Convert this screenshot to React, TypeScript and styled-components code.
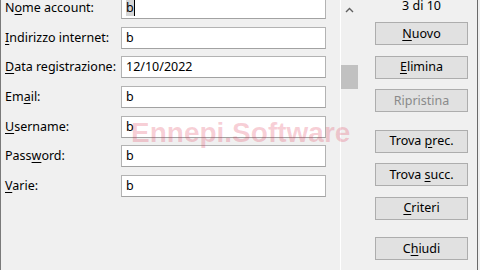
import React from "react";
import styled, { createGlobalStyle } from "styled-components";

const GlobalStyle = createGlobalStyle`
  html, body {
    margin: 0;
    background: #f0f0f0;
    overflow: hidden;
  }
  body {
    font-family: "Noto Sans", "Open Sans", sans-serif;
    font-size: 12.5px;
    color: #000;
  }
`;

const Frame = styled.div`
  position: relative;
  display: flex;
  width: 476px;
  height: 270px;
  border-left: 1px solid #7a7a7a;
  border-right: 1px solid #6a6a6a;
  overflow: hidden;
`;

const FormPanel = styled.div`
  display: grid;
  grid-template-columns: 116px 205px;
  grid-auto-rows: 22px;
  row-gap: 7.67px;
  align-items: center;
  align-content: start;
  width: 335px;
  padding-left: 4px;
  margin-top: -3px;
`;

const Label = styled.label`
  white-space: nowrap;
  line-height: 16px;
`;

const Key = styled.span`
  text-decoration: underline;
  text-underline-offset: 2px;
`;

const Field = styled.div`
  box-sizing: border-box;
  height: 22px;
  background: #fff;
  border: 1px solid #b3b3b3;
  border-bottom-color: #a2a2a2;
  padding-left: 4px;
  line-height: 20px;
  white-space: nowrap;
`;

const Selected = styled.span`
  background: #d6d6d6;
  border-right: 1px solid #000;
`;

const ScrollColumn = styled.div`
  width: 17px;
  border-left: 1px solid #ffffff;
  display: flex;
  flex-direction: column;
  align-items: center;
`;

const Arrow = styled.svg`
  margin-top: 7px;
`;

const Thumb = styled.div`
  margin-top: 52px;
  width: 17px;
  height: 24px;
  background: #c1c1c1;
`;

const ButtonColumn = styled.div`
  display: flex;
  flex-direction: column;
  width: 93px;
  margin-left: 17px;
`;

const Counter = styled.div`
  height: 22px;
  margin-top: -1px;
  margin-bottom: 1px;
  line-height: 14px;
  text-align: center;
`;

const Group = styled.div`
  display: flex;
  flex-direction: column;
  gap: 10.5px;
  & + & {
    margin-top: 17.5px;
  }
`;

const Button = styled.button<{ $disabled?: boolean }>`
  box-sizing: border-box;
  height: 23px;
  width: 93px;
  padding: 0;
  background: #e1e1e1;
  border: 1px solid #adadad;
  font-family: inherit;
  font-size: 12.5px;
  line-height: 20px;
  color: ${(p) => (p.$disabled ? "#8a8a8a" : "#000")};
`;

const Watermark = styled.div`
  position: absolute;
  left: 130px;
  top: 119px;
  font-family: "Liberation Sans", Arial, sans-serif;
  font-weight: bold;
  font-size: 28px;
  line-height: 28px;
  color: rgba(222, 40, 72, 0.22);
  white-space: nowrap;
  pointer-events: none;
`;

type Row = { pre: string; key: string; post: string; value: React.ReactNode };

const rows: Row[] = [
  { pre: "N", key: "o", post: "me account:", value: <Selected>b</Selected> },
  { pre: "", key: "I", post: "ndirizzo internet:", value: "b" },
  { pre: "", key: "D", post: "ata registrazione:", value: "12/10/2022" },
  { pre: "Em", key: "a", post: "il:", value: "b" },
  { pre: "", key: "U", post: "sername:", value: "b" },
  { pre: "Pass", key: "w", post: "ord:", value: "b" },
  { pre: "", key: "V", post: "arie:", value: "b" },
];

type Btn = { pre: string; key: string; post: string; disabled?: boolean };

const groups: Btn[][] = [
  [
    { pre: "", key: "N", post: "uovo" },
    { pre: "", key: "E", post: "limina" },
    { pre: "Ripristina", key: "", post: "", disabled: true },
  ],
  [
    { pre: "Trova ", key: "p", post: "rec." },
    { pre: "Trova ", key: "s", post: "ucc." },
    { pre: "", key: "C", post: "riteri" },
  ],
  [{ pre: "C", key: "h", post: "iudi" }],
];

export default function App() {
  return (
    <>
      <GlobalStyle />
      <Frame>
        <FormPanel>
          {rows.map((r) => (
            <React.Fragment key={r.post}>
              <Label>
                {r.pre}
                <Key>{r.key}</Key>
                {r.post}
              </Label>
              <Field>{r.value}</Field>
            </React.Fragment>
          ))}
        </FormPanel>

        <ScrollColumn>
          <Arrow width="9" height="6" viewBox="0 0 9 6">
            <path d="M1 5 L4.5 1.5 L8 5" fill="none" stroke="#606060" strokeWidth="1.4" />
          </Arrow>
          <Thumb />
        </ScrollColumn>

        <ButtonColumn>
          <Counter>3 di 10</Counter>
          {groups.map((g, i) => (
            <Group key={i}>
              {g.map((b) => (
                <Button key={b.pre + b.key + b.post} $disabled={b.disabled}>
                  {b.pre}
                  {b.key && <Key>{b.key}</Key>}
                  {b.post}
                </Button>
              ))}
            </Group>
          ))}
        </ButtonColumn>

        <Watermark>Ennepi.Software</Watermark>
      </Frame>
    </>
  );
}
